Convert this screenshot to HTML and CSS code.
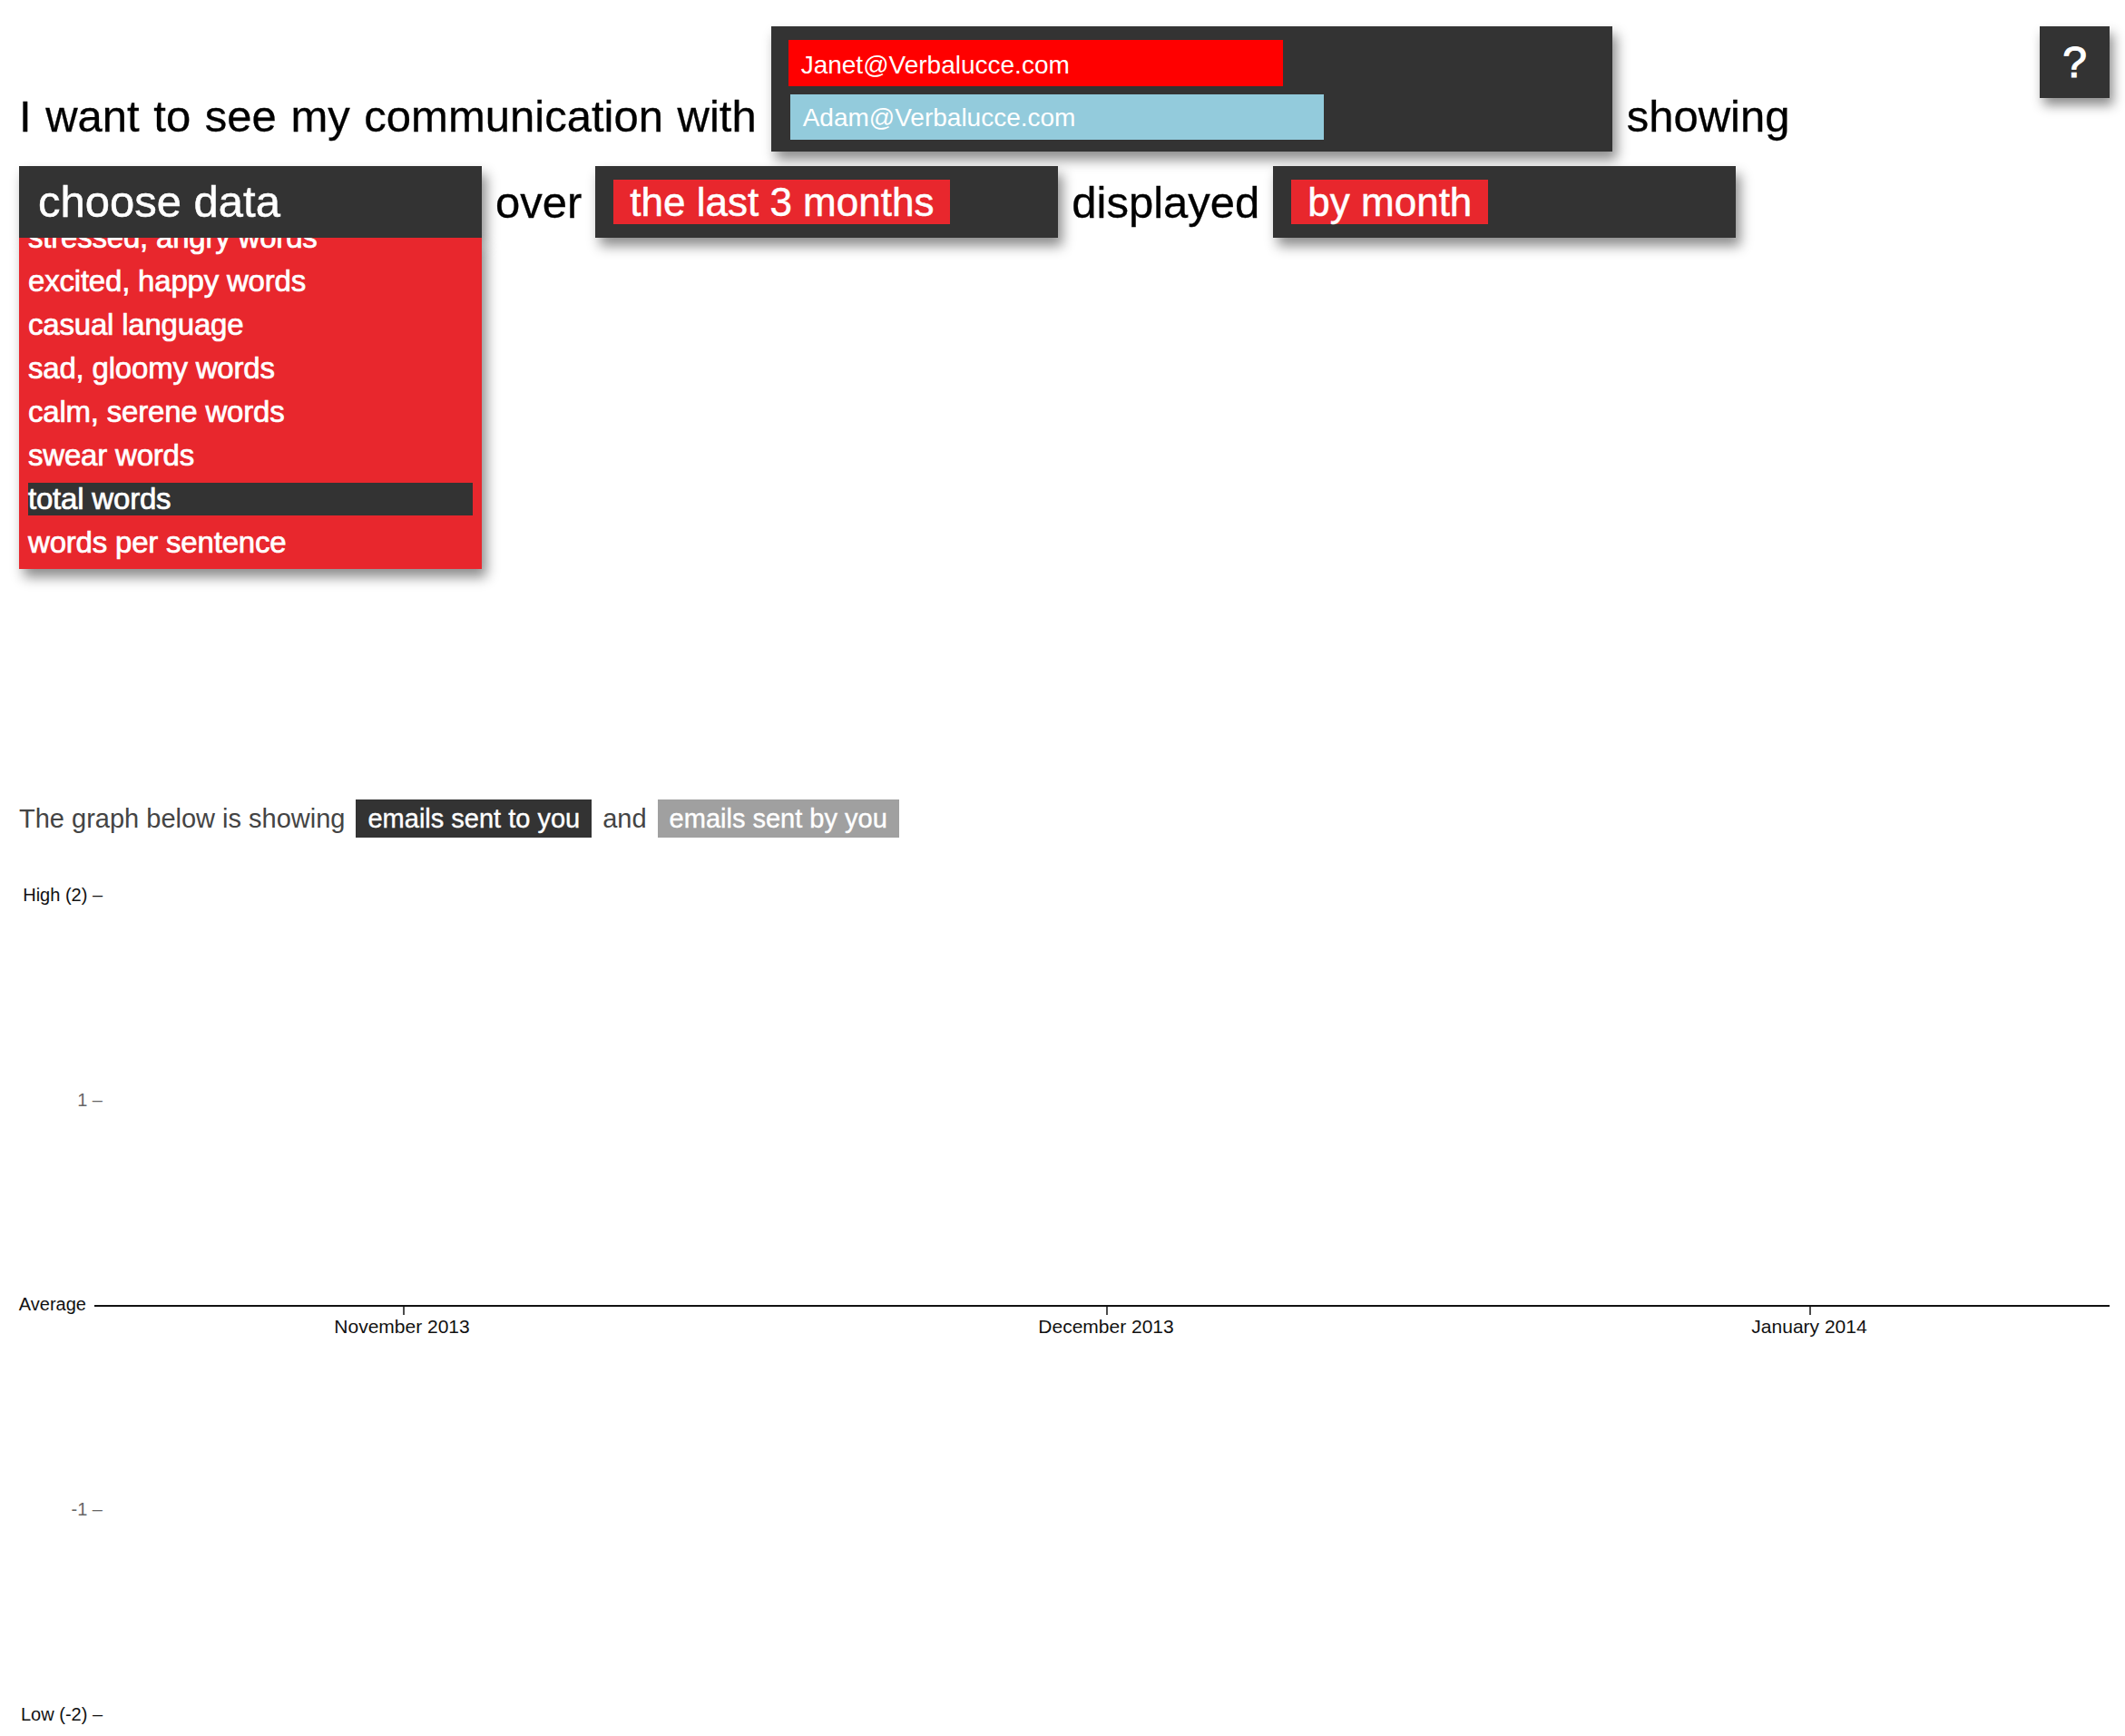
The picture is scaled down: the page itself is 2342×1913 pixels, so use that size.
FILE: index.html
```html
<!DOCTYPE html>
<html lang="en">
<head>
<meta charset="utf-8">
<title>Verbalucce</title>
<link rel="stylesheet" href="styles.css">
</head>
<body>
<div class="page">
  <div class="row row-one">
    <span class="phrase phrase-first">I want to see my communication with</span>
    <div class="people">
      <div class="person person-red">Janet@Verbalucce.com</div>
      <div class="person person-blue">Adam@Verbalucce.com</div>
    </div>
    <span class="phrase">showing</span>
    <div class="help">?</div>
  </div>

  <div class="row row-two">
    <div class="select select-data">
      <div class="select-head">choose data</div>
      <div class="menu">
        <ul class="menu-list">
          <li class="menu-item">stressed, angry words</li>
          <li class="menu-item">excited, happy words</li>
          <li class="menu-item">casual language</li>
          <li class="menu-item">sad, gloomy words</li>
          <li class="menu-item">calm, serene words</li>
          <li class="menu-item">swear words</li>
          <li class="menu-item menu-item-active">total words</li>
          <li class="menu-item">words per sentence</li>
        </ul>
      </div>
    </div>
    <span class="phrase">over</span>
    <div class="select">
      <span class="chip">the last 3 months</span>
    </div>
    <span class="phrase">displayed</span>
    <div class="select">
      <span class="chip">by month</span>
    </div>
  </div>

  <div class="legend">
    <span class="legend-text">The graph below is showing</span>
    <span class="legend-key key-dark">emails sent to you</span>
    <span class="legend-text">and</span>
    <span class="legend-key key-grey">emails sent by you</span>
  </div>
</div>

<svg class="chart" width="2342" height="973" viewBox="0 0 2342 973" xmlns="http://www.w3.org/2000/svg">
  <g class="axis-y" font-family="'Liberation Sans', Arial, sans-serif" font-size="20" text-anchor="end">
    <text x="113" y="53" fill="#111">High (2) –</text>
    <text x="113" y="279" fill="#666">1 –</text>
    <text x="95" y="504" fill="#111">Average</text>
    <text x="113" y="730" fill="#666">-1 –</text>
    <text x="113" y="956" fill="#111">Low (-2) –</text>
  </g>
  <line x1="104" y1="499" x2="2325" y2="499" stroke="#111" stroke-width="2"/>
  <g stroke="#111" stroke-width="1.5">
    <line x1="445" y1="499" x2="445" y2="509"/>
    <line x1="1220" y1="499" x2="1220" y2="509"/>
    <line x1="1995" y1="499" x2="1995" y2="509"/>
  </g>
  <g font-family="'Liberation Sans', Arial, sans-serif" font-size="21" fill="#111" text-anchor="middle">
    <text x="443" y="529">November 2013</text>
    <text x="1219" y="529">December 2013</text>
    <text x="1994" y="529">January 2014</text>
  </g>
</svg>
</body>
</html>
```

FILE: styles.css
```css
html, body {
  margin: 0;
  padding: 0;
  background: #ffffff;
}

body {
  font-family: "Liberation Sans", Arial, Helvetica, sans-serif;
  color: #000;
  width: 2342px;
}

.page {
  padding: 29px 17px 0 21px;
}

.row {
  display: flex;
}

.row-one {
  gap: 16px;
  align-items: flex-end;
}

.row-two {
  gap: 15px;
  margin-top: 16px;
  align-items: center;
}

.phrase {
  font-size: 49px;
  line-height: 56px;
  white-space: nowrap;
  -webkit-text-stroke: 0.3px #000;
}

.row-one .phrase {
  padding-bottom: 11px;
}

.phrase-first {
  word-spacing: 2px;
}

/* email chooser */
.people {
  width: 927px;
  height: 138px;
  box-sizing: border-box;
  padding: 15px 19px 13px 19px;
  background: #333333;
  box-shadow: 5px 9px 13px rgba(0, 0, 0, 0.45);
  display: flex;
  flex-direction: column;
  gap: 9px;
}

.person {
  color: #fff;
  font-size: 28px;
  box-sizing: border-box;
  white-space: nowrap;
}

.person-red {
  width: 545px;
  height: 51px;
  padding: 4px 0 0 14px;
  line-height: 47px;
  background: #ff0000;
}

.person-blue {
  width: 588px;
  height: 50px;
  margin-left: 2px;
  padding: 2px 0 0 14px;
  line-height: 48px;
  background: #93cbdc;
}

.help {
  margin-left: auto;
  align-self: flex-start;
  width: 77px;
  height: 79px;
  background: #333333;
  color: #fff;
  font-size: 48px;
  line-height: 79px;
  text-align: center;
  -webkit-text-stroke: 1.2px #fff;
  box-shadow: 4px 8px 12px rgba(0, 0, 0, 0.45);
}

/* selects */
.select {
  position: relative;
  width: 510px;
  height: 79px;
  box-sizing: border-box;
  padding: 0 20px;
  background: #333333;
  box-shadow: 5px 9px 13px rgba(0, 0, 0, 0.45);
  display: flex;
  align-items: center;
}

.select-data {
  padding: 0;
  z-index: 2;
}

.select-head {
  position: relative;
  z-index: 2;
  width: 100%;
  height: 79px;
  box-sizing: border-box;
  padding-left: 21px;
  background: #333333;
  color: #fff;
  font-size: 49px;
  line-height: 79px;
  white-space: nowrap;
  -webkit-text-stroke: 0.5px #fff;
}

.chip {
  background: #e8272d;
  color: #fff;
  font-size: 44px;
  line-height: 49px;
  padding: 0 18px;
  white-space: nowrap;
  -webkit-text-stroke: 0.5px #fff;
}

.menu {
  position: absolute;
  top: 100%;
  left: 0;
  width: 100%;
  height: 365px;
  overflow: hidden;
  background: #e8272d;
  box-shadow: 5px 9px 13px rgba(0, 0, 0, 0.45);
}

.menu-list {
  list-style: none;
  margin: -18px 0 0 0;
  padding: 0 10px;
}

.menu-item {
  color: #fff;
  font-size: 33px;
  line-height: 36px;
  height: 36px;
  margin-bottom: 12px;
  white-space: nowrap;
  letter-spacing: -0.2px;
  -webkit-text-stroke: 0.7px #fff;
}

.menu-item-active {
  background: #333333;
}

/* legend */
.legend {
  margin-top: 619px;
  display: flex;
  align-items: center;
  gap: 12px;
  font-size: 29px;
  line-height: 42px;
}

.legend-text {
  color: #444;
}

.legend-key {
  color: #fff;
  padding: 0 13px;
  white-space: nowrap;
  -webkit-text-stroke: 0.4px #fff;
}

.key-dark {
  background: #333333;
}

.key-grey {
  background: #a0a0a0;
}

.chart {
  display: block;
  margin-top: 17px;
}
```
